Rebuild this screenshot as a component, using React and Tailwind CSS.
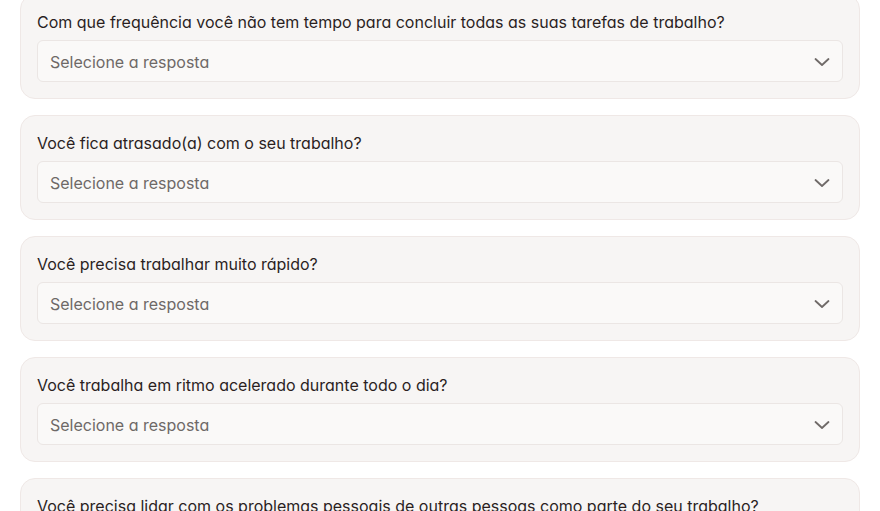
import React from 'react';

const questions = [
  'Com que frequência você não tem tempo para concluir todas as suas tarefas de trabalho?',
  'Você fica atrasado(a) com o seu trabalho?',
  'Você precisa trabalhar muito rápido?',
  'Você trabalha em ritmo acelerado durante todo o dia?',
  'Você precisa lidar com os problemas pessoais de outras pessoas como parte do seu trabalho?',
];

const Chevron = () => (
  <svg width="16" height="10" viewBox="0 0 16 10" fill="none" className="text-[#6f6a68]">
    <polyline points="1.5,2 8,8 14.5,2" stroke="currentColor" strokeWidth="1.8" strokeLinecap="round" strokeLinejoin="round" />
  </svg>
);

const QuestionCard = ({ text }) => (
  <div className="rounded-[15px] border border-[#efe8e6] bg-[#f7f5f4] px-4 pt-[17px] pb-4">
    <p className="text-base leading-5 text-[#2b1f1f] [font-feature-settings:'cv11']">{text}</p>
    <button className="mt-2 flex h-[42px] w-full items-center justify-between rounded-md border border-[#ebe6e4] bg-[#faf9f8] px-3 pt-px text-left">
      <span className="text-base text-[#6e6967] [font-feature-settings:'cv11']">Selecione a resposta</span>
      <Chevron />
    </button>
  </div>
);

export default function App() {
  return (
    <div className="h-[511px] w-full overflow-hidden bg-white font-['Inter',sans-serif]">
      <div className="-mt-[6px] flex flex-col gap-4 px-5">
        {questions.map((q) => (
          <QuestionCard key={q} text={q} />
        ))}
      </div>
    </div>
  );
}
